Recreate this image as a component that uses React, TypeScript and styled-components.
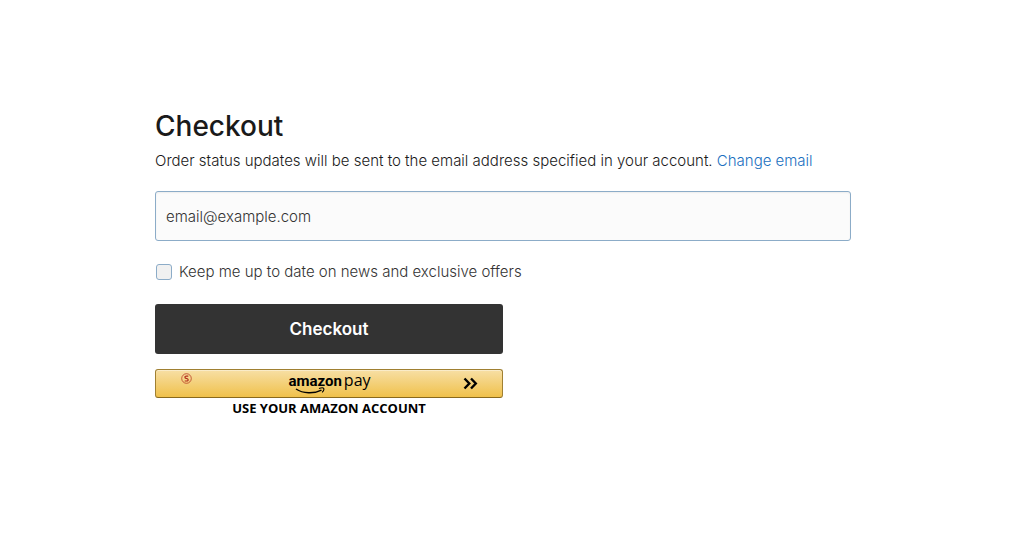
import React, { useState } from "react";
import styled, { createGlobalStyle } from "styled-components";

const GlobalStyle = createGlobalStyle`
  *, *::before, *::after {
    box-sizing: border-box;
  }
  body {
    margin: 0;
    background: #fff;
    color: #1a1a1a;
    font-family: Inter, "Liberation Sans", sans-serif;
    font-size: 15px;
    font-weight: 300;
    line-height: 24px;
  }
`;

const Page = styled.main`
  padding: 108px 173px 48px 155px;
`;

const CheckoutForm = styled.form`
  display: flex;
  flex-direction: column;
`;

const Title = styled.h1`
  margin: 0 0 5px;
  font-size: 28px;
  font-weight: 500;
  line-height: 36px;
`;

const Intro = styled.p`
  margin: 0 0 18px;
`;

const TextLink = styled.a`
  color: #1a70c0;
  text-decoration: none;
`;

const EmailInput = styled.input`
  width: 100%;
  height: 50px;
  margin: 0 0 19px;
  padding: 0 10px;
  border: 1px solid #8cacc8;
  border-radius: 3px;
  background: #fbfbfb;
  box-shadow: inset 0 1px 2px rgba(0, 0, 0, 0.06);
  color: #333;
  font: inherit;
  outline: none;
`;

const OptIn = styled.label`
  display: flex;
  align-items: center;
  gap: 7px;
  margin: 0 0 20px 1px;
  color: #333;
`;

const Checkbox = styled.input`
  appearance: none;
  width: 16px;
  height: 16px;
  margin: 0;
  border: 1px solid #8cacc8;
  border-radius: 3px;
  background: #f1f1f1;

  &:checked {
    background: #333;
  }
`;

const Actions = styled.div`
  display: flex;
  flex-direction: column;
  width: 50%;
`;

const SubmitButton = styled.button`
  height: 50px;
  margin: 0 0 15px;
  border: 0;
  border-radius: 3px;
  background: #333;
  color: #fff;
  font: inherit;
  font-size: 17px;
  font-weight: 600;
`;

const AmazonButton = styled.button`
  display: grid;
  grid-template-columns: 1fr auto 1fr;
  height: 29px;
  padding: 0 24px 0 25px;
  border: 1px solid #a08032;
  border-bottom-color: #89691c;
  border-radius: 3px;
  background: linear-gradient(#f7dfa5, #f0c14b);
  box-shadow: inset 0 1px 0 rgba(255, 255, 255, 0.4);
  color: #000;
`;

const SandboxMark = styled.svg`
  align-self: start;
  width: 11px;
  height: 11px;
  margin-top: 3px;
`;

const AmazonLogo = styled.span`
  display: grid;
  align-content: start;
  height: 27px;
`;

const Wordmark = styled.span`
  display: flex;
  align-items: baseline;
  gap: 2px;
  height: 17px;
  line-height: 20px;
`;

const AmazonWord = styled.span`
  font-family: Roboto, sans-serif;
  font-size: 15px;
  font-weight: 700;
`;

const PayWord = styled.span`
  font-family: "Open Sans", sans-serif;
  font-size: 16px;
  font-weight: 400;
`;

const Smile = styled.svg`
  width: 40px;
  height: 8px;
`;

const Chevrons = styled.svg`
  align-self: center;
  justify-self: end;
  width: 15px;
  height: 13px;
`;

const Caption = styled.span`
  font-family: "Open Sans", sans-serif;
  font-size: 13px;
  font-weight: 700;
  line-height: 20px;
  color: #000;
  text-align: center;
`;

export default function App() {
  const [subscribed, setSubscribed] = useState(false);

  return (
    <>
      <GlobalStyle />
      <Page>
        <CheckoutForm onSubmit={(event) => event.preventDefault()}>
          <Title>Checkout</Title>
          <Intro>
            Order status updates will be sent to the email address specified in your account.{" "}
            <TextLink href="#email">Change email</TextLink>
          </Intro>
          <EmailInput type="email" aria-label="Email address" defaultValue="email@example.com" />
          <OptIn htmlFor="newsletter">
            <Checkbox
              id="newsletter"
              type="checkbox"
              checked={subscribed}
              onChange={(event) => setSubscribed(event.target.checked)}
            />
            Keep me up to date on news and exclusive offers
          </OptIn>
          <Actions>
            <SubmitButton type="submit">Checkout</SubmitButton>
            <AmazonButton type="button" aria-describedby="amazon-caption">
              <SandboxMark viewBox="0 0 11 11" fill="none" stroke="#b22a1a" aria-hidden="true">
                <circle cx="5.5" cy="5.5" r="4.8" strokeWidth="0.7" />
                <path d="M7.3 3.1H5.300C3.400 3.100 3.600 5.100 5.200 5.400 7.800 5.700 7.700 8 5.700 8H3.700" strokeWidth="1.2" />
              </SandboxMark>
              <AmazonLogo>
                <Wordmark>
                  <AmazonWord>amazon</AmazonWord>
                  <PayWord>pay</PayWord>
                </Wordmark>
                <Smile viewBox="0 0 40 8" fill="none" stroke="#000" aria-hidden="true">
                  <path d="M8 2C15 6.800 26 7 33.500 3.200" strokeWidth="1.5" />
                  <path d="M31 1.600c2-.8 4.300-.8 4.700-.2.400.7-.3 2.700-1.600 4" strokeWidth="1.1" />
                </Smile>
              </AmazonLogo>
              <Chevrons viewBox="0 0 15 13" fill="none" stroke="#000" strokeWidth="2.4" aria-hidden="true">
                <path d="M1.500 1.500 6.300 6.500 1.500 11.500M8 1.500 12.800 6.500 8 11.500" />
              </Chevrons>
            </AmazonButton>
            <Caption id="amazon-caption">USE YOUR AMAZON ACCOUNT</Caption>
          </Actions>
        </CheckoutForm>
      </Page>
    </>
  );
}
